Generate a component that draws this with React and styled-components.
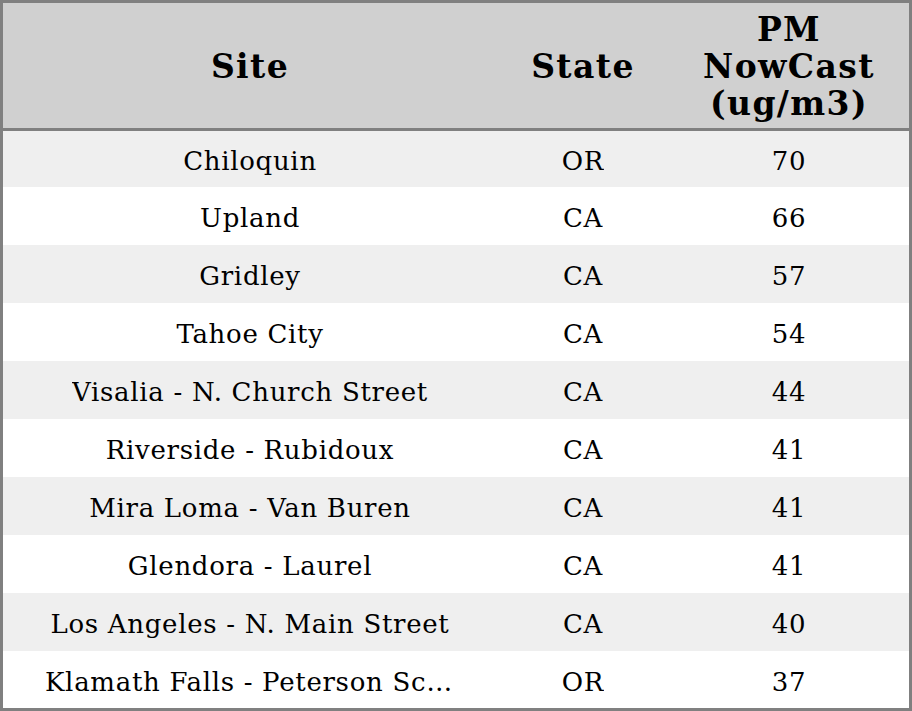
import React from "react";
import styled, { createGlobalStyle } from "styled-components";

const GlobalStyle = createGlobalStyle`
  html, body {
    margin: 0;
    padding: 0;
    background: #ffffff;
  }
`;

const rows = [
  { site: "Chiloquin", state: "OR", pm: 70 },
  { site: "Upland", state: "CA", pm: 66 },
  { site: "Gridley", state: "CA", pm: 57 },
  { site: "Tahoe City", state: "CA", pm: 54 },
  { site: "Visalia - N. Church Street", state: "CA", pm: 44 },
  { site: "Riverside - Rubidoux", state: "CA", pm: 41 },
  { site: "Mira Loma - Van Buren", state: "CA", pm: 41 },
  { site: "Glendora - Laurel", state: "CA", pm: 41 },
  { site: "Los Angeles - N. Main Street", state: "CA", pm: 40 },
  { site: "Klamath Falls - Peterson School", state: "OR", pm: 37 },
];

const Table = styled.div`
  width: 912px;
  height: 711px;
  box-sizing: border-box;
  border: 3px solid #808080;
  display: grid;
  grid-template-columns: 494px 172px 240px;
  grid-template-rows: 128px 56px repeat(8, 58px) 57px;
  font-family: "DejaVu Serif", serif;
  color: #000;
`;

const HeadCell = styled.div`
  background: #d0d0d0;
  border-bottom: 3px solid #808080;
  display: flex;
  align-items: center;
  justify-content: center;
  text-align: center;
  font-weight: bold;
  font-size: 33px;
  line-height: 37px;
  letter-spacing: 1.4px;
  padding-top: 1px;
`;

const Cell = styled.div`
  background: ${(p) => (p.$striped ? "#efefef" : "#ffffff")};
  display: flex;
  align-items: center;
  justify-content: center;
  font-size: 26px;
  letter-spacing: 0.7px;
  padding: 0 ${(p) => (p.$wide ? "42px" : "0")};
  min-width: 0;
`;

const Clip = styled.span`
  white-space: nowrap;
  overflow: hidden;
  text-overflow: ellipsis;
  padding-top: 4px;
`;

export default function App() {
  return (
    <>
      <GlobalStyle />
      <Table>
        <HeadCell>Site</HeadCell>
        <HeadCell>State</HeadCell>
        <HeadCell>
          PM
          <br />
          NowCast
          <br />
          (ug/m3)
        </HeadCell>
        {rows.map((r, i) => (
          <React.Fragment key={r.site}>
            <Cell $striped={i % 2 === 0} $wide>
              <Clip>{r.site}</Clip>
            </Cell>
            <Cell $striped={i % 2 === 0}>
              <Clip>{r.state}</Clip>
            </Cell>
            <Cell $striped={i % 2 === 0}>
              <Clip>{r.pm}</Clip>
            </Cell>
          </React.Fragment>
        ))}
      </Table>
    </>
  );
}
